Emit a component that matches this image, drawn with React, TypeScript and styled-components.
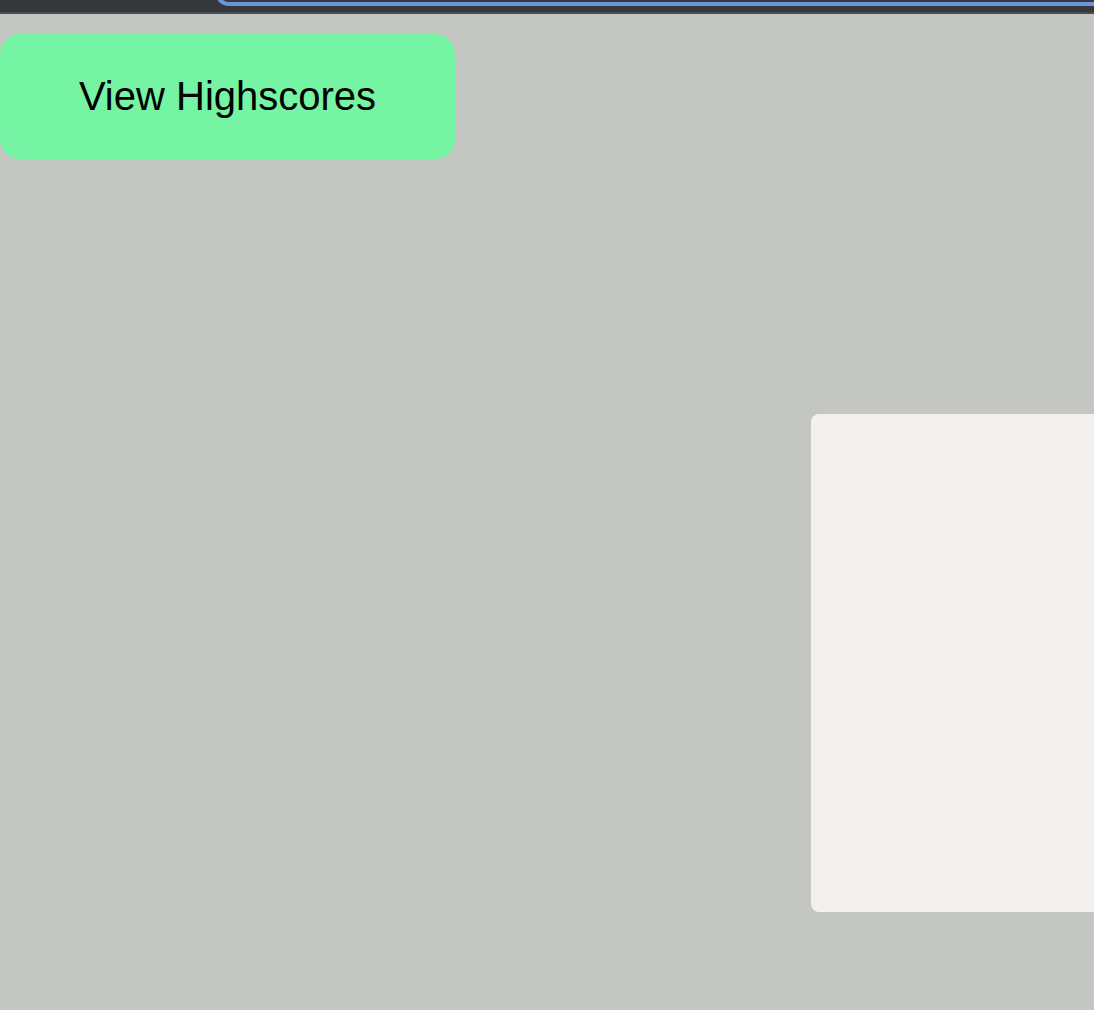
import * as React from "react";
import styled, { createGlobalStyle } from "styled-components";

const GlobalStyle = createGlobalStyle`
  html, body {
    margin: 0;
    padding: 0;
    background: #c4c6c2;
    overflow: hidden;
  }
  body {
    font-family: "Liberation Sans", Arial, sans-serif;
  }
`;

export default function App() {
  return (
    <Page>
      <GlobalStyle />
      <TopBar>
        <AddressRing />
      </TopBar>
      <TopEdge />
      <Content>
        <ScoreButton>View Highscores</ScoreButton>
        <PanelRow>
          <GamePanel />
        </PanelRow>
      </Content>
    </Page>
  );
}

const Page = styled.div`
  width: 1094px;
  height: 1010px;
  background: #c4c6c2;
  overflow: hidden;
  display: flex;
  flex-direction: column;
`;

const TopBar = styled.div`
  height: 12px;
  background: #36373b;
  display: flex;
  padding-left: 215px;
  overflow: hidden;
`;

const AddressRing = styled.div`
  flex: 1;
  height: 30px;
  margin-top: -24px;
  margin-right: -20px;
  border: 4px solid #6b93e0;
  border-radius: 14px;
  box-sizing: border-box;
`;

const TopEdge = styled.div`
  height: 2px;
  background: #4b4c50;
`;

const Content = styled.div`
  flex: 1;
  display: flex;
  flex-direction: column;
  padding-top: 20px;
`;

const ScoreButton = styled.button`
  width: 455px;
  height: 125px;
  border: none;
  border-radius: 20px;
  background: #75f5a3;
  color: #000;
  font-family: "Liberation Sans", Arial, sans-serif;
  font-size: 40px;
  padding: 0;
  cursor: pointer;
`;

const PanelRow = styled.div`
  display: flex;
  justify-content: flex-start;
  padding-left: 811px;
  margin-top: 255px;
`;

const GamePanel = styled.div`
  flex-shrink: 0;
  width: 500px;
  height: 498px;
  background: #f2f1ef;
  border-radius: 8px;
`;
